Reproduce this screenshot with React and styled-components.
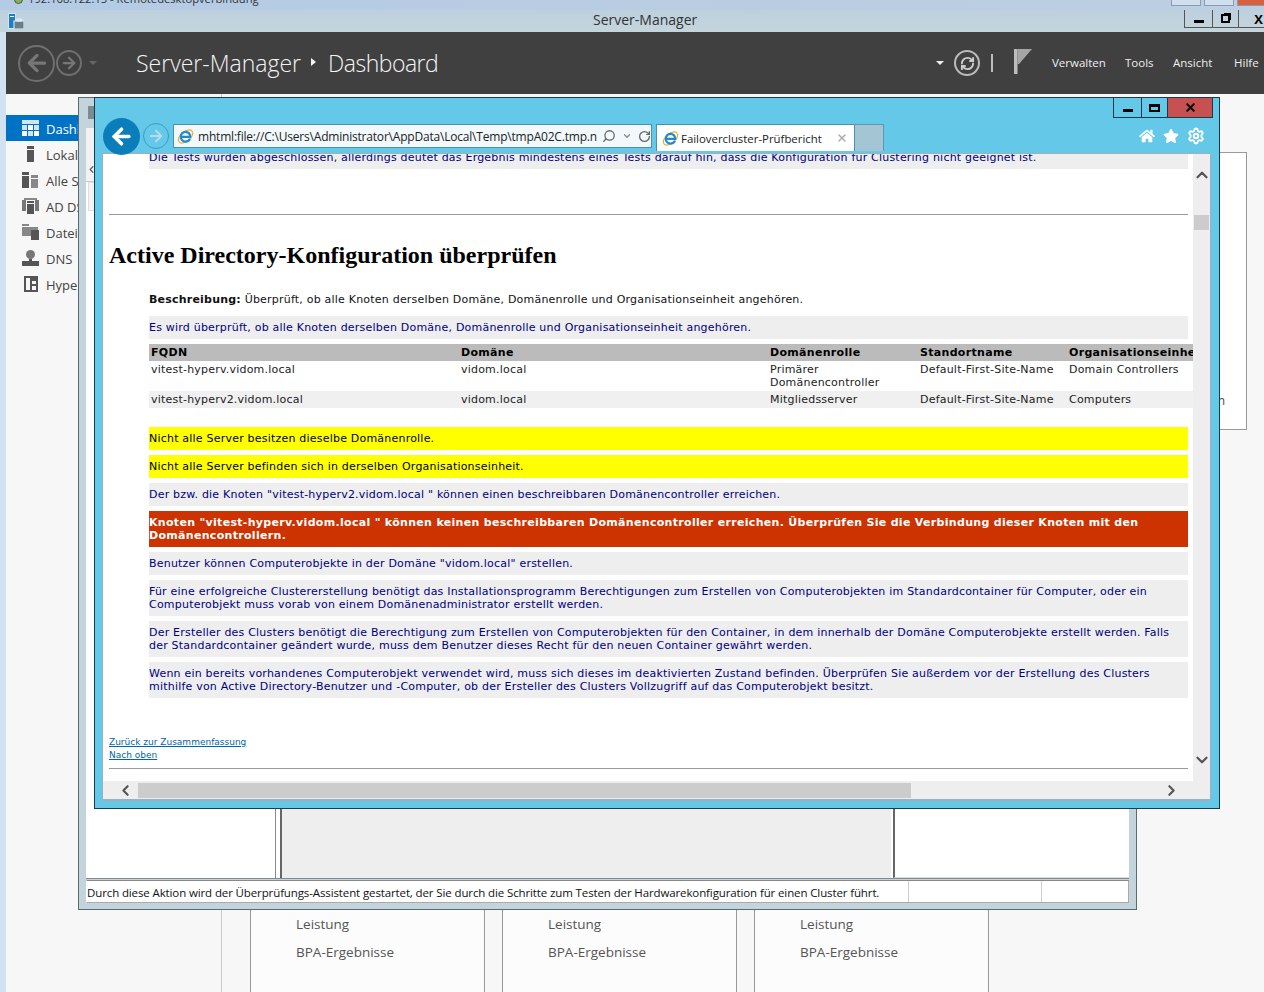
import React from "react";
import styled, { createGlobalStyle } from "styled-components";
import { ArrowLeft, ArrowRight, ChevronDown, ChevronLeft, ChevronRight, ChevronUp, RefreshCw, RotateCw, Search, Settings, X } from "lucide-react";
import { FaHome, FaStar } from "react-icons/fa";

const GlobalStyle = createGlobalStyle`
  html, body {
    margin: 0;
    padding: 0;
    background: #f7f7f7;
    overflow: hidden;
  }
  * {
    box-sizing: border-box;
  }
`;

const UI_FONT = `"Open Sans", "Noto Sans", sans-serif`;
const DOC_FONT = `"DejaVu Sans", Verdana, sans-serif`;

function Sidebar() {
  const items = [
    { label: "Dashboard", icon: <DashIcon />, active: true },
    { label: "Lokaler Server", icon: <LocalIcon /> },
    { label: "Alle Server", icon: <AllIcon /> },
    { label: "AD DS", icon: <AdIcon /> },
    { label: "Dateidienste", icon: <FilesIcon /> },
    { label: "DNS", icon: <DnsIcon /> },
    { label: "Hyper-V", icon: <HyperIcon /> },
  ];

  return (
    <SideColumn>
      {items.map((item) => (
        <SideItem key={item.label} $active={item.active}>
          {item.icon}
          <span>{item.label}</span>
        </SideItem>
      ))}
    </SideColumn>
  );
}

const DashIcon = () => (
  <svg width="17" height="16" viewBox="0 0 17 16" fill="#cfe4f4">
    <rect x="0" y="0" width="17" height="4" />
    <rect x="0" y="5" width="5" height="5" />
    <rect x="6" y="5" width="5" height="5" fill="#fff" />
    <rect x="12" y="5" width="5" height="5" />
    <rect x="0" y="11" width="5" height="5" fill="#fff" />
    <rect x="6" y="11" width="5" height="5" />
    <rect x="12" y="11" width="5" height="5" fill="#fff" />
  </svg>
);

const LocalIcon = () => (
  <svg width="17" height="16" viewBox="0 0 17 16" fill="#555">
    <rect x="5" y="0" width="7" height="3" />
    <rect x="5" y="4" width="7" height="12" />
  </svg>
);

const AllIcon = () => (
  <svg width="17" height="16" viewBox="0 0 17 16" fill="#555">
    <rect x="0" y="0" width="7" height="3" />
    <rect x="0" y="4" width="7" height="12" />
    <rect x="9" y="3" width="7" height="3" fill="#888" />
    <rect x="9" y="7" width="7" height="9" fill="#888" />
  </svg>
);

const AdIcon = () => (
  <svg width="17" height="16" viewBox="0 0 17 16" fill="#555">
    <rect x="0" y="2" width="4" height="11" fill="#777" />
    <rect x="13" y="2" width="4" height="11" fill="#777" />
    <rect x="2" y="0" width="13" height="2" fill="#888" />
    <rect x="5" y="3" width="7" height="2" />
    <rect x="5" y="6" width="7" height="10" />
  </svg>
);

const FilesIcon = () => (
  <svg width="17" height="16" viewBox="0 0 17 16" fill="#888">
    <rect x="0" y="0" width="7" height="2" />
    <rect x="0" y="3" width="16" height="9" />
    <rect x="9" y="6" width="8" height="10" fill="#555" />
  </svg>
);

const DnsIcon = () => (
  <svg width="17" height="16" viewBox="0 0 17 16" fill="#555">
    <circle cx="8.5" cy="4.5" r="4.5" fill="#777" />
    <rect x="0" y="11" width="17" height="5" />
    <rect x="7" y="9" width="3" height="2" />
  </svg>
);

const HyperIcon = () => (
  <svg width="17" height="16" viewBox="0 0 17 16" fill="#555">
    <rect x="2" y="0" width="14" height="16" />
    <rect x="4" y="2" width="4" height="12" fill="#f7f7f7" />
    <rect x="10" y="5" width="4" height="3" fill="#f7f7f7" />
    <rect x="10" y="10" width="4" height="4" fill="#f7f7f7" />
  </svg>
);

const ServerManagerIcon = () => (
  <svg width="16" height="16" viewBox="0 0 16 16">
    <rect x="0.5" y="0.5" width="7" height="15" fill="#1f7fc4" stroke="#cfe6f5" />
    <rect x="2" y="3" width="4" height="1" fill="#fff" />
    <rect x="6" y="8" width="10" height="8" fill="#6a7f8c" stroke="#e8f2f8" strokeWidth="1" />
    <rect x="9" y="6" width="4" height="2" fill="none" stroke="#e8f2f8" />
  </svg>
);

const IeLogo = () => (
  <svg width="17" height="17" viewBox="0 0 20 20">
    <ellipse cx="10" cy="10" rx="10" ry="5.5" fill="none" stroke="#e9b233" strokeWidth="1.5" transform="rotate(-40 10 10)" />
    <path
      d="M4.5 10.5H15.5C15.5 6.5 13 4.5 10 4.5C6.8 4.5 4.5 7.2 4.5 10.5C4.5 13.8 6.8 16 10 16C12.3 16 14.2 15 15.2 13"
      fill="none"
      stroke="#1f8ad4"
      strokeWidth="2.6"
    />
  </svg>
);

const FlagIcon = () => (
  <svg width="18" height="25" viewBox="0 0 18 25">
    <rect x="0" y="0" width="3.5" height="25" fill="#bdbdbd" />
    <path d="M3.5 0H18L5 15H3.5Z" fill="#a5a5a5" />
  </svg>
);

function Doc() {
  return (
    <DocBody>
      <Band $top={0}>
        Die Tests wurden abgeschlossen, allerdings deutet das Ergebnis mindestens eines Tests darauf hin, dass die
        Konfiguration für Clustering nicht geeignet ist.
      </Band>
      <Rule $top={45} />
      <Heading>Active Directory-Konfiguration überprüfen</Heading>
      <Description>
        <b>Beschreibung:</b> Überprüft, ob alle Knoten derselben Domäne, Domänenrolle und Organisationseinheit angehören.
      </Description>
      <Band $top={10}>
        Es wird überprüft, ob alle Knoten derselben Domäne, Domänenrolle und Organisationseinheit angehören.
      </Band>
      <ResultTable>
        <colgroup>
          <col width="310" />
          <col width="309" />
          <col width="150" />
          <col width="149" />
          <col width="200" />
        </colgroup>
        <thead>
          <tr>
            <th>FQDN</th>
            <th>Domäne</th>
            <th>Domänenrolle</th>
            <th>Standortname</th>
            <th>Organisationseinheit</th>
          </tr>
        </thead>
        <tbody>
          <tr>
            <td>vitest-hyperv.vidom.local</td>
            <td>vidom.local</td>
            <td>Primärer Domänencontroller</td>
            <td>Default-First-Site-Name</td>
            <td>Domain Controllers</td>
          </tr>
          <tr>
            <td>vitest-hyperv2.vidom.local</td>
            <td>vidom.local</td>
            <td>Mitgliedsserver</td>
            <td>Default-First-Site-Name</td>
            <td>Computers</td>
          </tr>
        </tbody>
      </ResultTable>
      <Band $tone="warn" $top={19}>
        Nicht alle Server besitzen dieselbe Domänenrolle.
      </Band>
      <Band $tone="warn">Nicht alle Server befinden sich in derselben Organisationseinheit.</Band>
      <Band>Der bzw. die Knoten "vitest-hyperv2.vidom.local " können einen beschreibbaren Domänencontroller erreichen.</Band>
      <Band $tone="error">
        Knoten "vitest-hyperv.vidom.local " können keinen beschreibbaren Domänencontroller erreichen. Überprüfen Sie die
        Verbindung dieser Knoten mit den Domänencontrollern.
      </Band>
      <Band>Benutzer können Computerobjekte in der Domäne "vidom.local" erstellen.</Band>
      <Band>
        Für eine erfolgreiche Clustererstellung benötigt das Installationsprogramm Berechtigungen zum Erstellen von
        Computerobjekten im Standardcontainer für Computer, oder ein Computerobjekt muss vorab von einem
        Domänenadministrator erstellt werden.
      </Band>
      <Band>
        Der Ersteller des Clusters benötigt die Berechtigung zum Erstellen von Computerobjekten für den Container, in dem
        innerhalb der Domäne Computerobjekte erstellt werden. Falls der Standardcontainer geändert wurde, muss dem Benutzer
        dieses Recht für den neuen Container gewährt werden.
      </Band>
      <Band>
        Wenn ein bereits vorhandenes Computerobjekt verwendet wird, muss sich dieses im deaktivierten Zustand befinden.
        Überprüfen Sie außerdem vor der Erstellung des Clusters mithilfe von Active Directory-Benutzer und -Computer, ob der
        Ersteller des Clusters Vollzugriff auf das Computerobjekt besitzt.
      </Band>
      <DocLinks>
        <a href="#summary">Zurück zur Zusammenfassung</a>
        <a href="#top">Nach oben</a>
      </DocLinks>
      <Rule $top={6} />
    </DocBody>
  );
}

function App() {
  return (
    <>
      <GlobalStyle />
      <Desktop>
        <RdpBar>
          <RdpDot />
          <RdpTitle>192.168.122.15 - Remotedesktopverbindung</RdpTitle>
          <RdpButtons>
            <RdpButton />
            <RdpButton />
            <RdpButton $close />
          </RdpButtons>
        </RdpBar>

        <TitleBar>
          <TitleIcon>
            <ServerManagerIcon />
          </TitleIcon>
          <TitleText>Server-Manager</TitleText>
          <WinControls>
            <WinButton $w={28}>
              <MinGlyph />
            </WinButton>
            <WinButton $w={26}>
              <RestoreGlyph />
            </WinButton>
            <WinButton $w={40}>
              <b>X</b>
            </WinButton>
          </WinControls>
        </TitleBar>

        <Frame>
          <Header>
            <NavCircle $size={37}>
              <ArrowLeft size={26} strokeWidth={3} color="#777" />
            </NavCircle>
            <NavCircle $size={26} $gap={1}>
              <ArrowRight size={18} strokeWidth={3} color="#777" />
            </NavCircle>
            <Caret $color="#666" $left={7} />
            <Crumb $left={39}>Server-Manager</Crumb>
            <CrumbArrow />
            <Crumb $left={12} $spacing={-0.5}>
              Dashboard
            </Crumb>
            <HeaderRight>
              <Caret $color="#eee" />
              <RefreshCircle>
                <RefreshCw size={15} strokeWidth={3} color="#ccc" />
              </RefreshCircle>
              <HeaderSep />
              <FlagSlot>
                <FlagIcon />
              </FlagSlot>
              <Menu $w={73}>Verwalten</Menu>
              <Menu $w={48}>Tools</Menu>
              <Menu $w={61}>Ansicht</Menu>
              <Menu $w={30}>Hilfe</Menu>
            </HeaderRight>
          </Header>
          <Body>
            <Sidebar />
            <Main>
              <SidePanel>n</SidePanel>
              <Tiles>
                {[0, 1, 2].map((i) => (
                  <Tile key={i}>
                    <TileLine>Leistung</TileLine>
                    <TileLine>BPA-Ergebnisse</TileLine>
                  </Tile>
                ))}
              </Tiles>
            </Main>
          </Body>
        </Frame>

        <WizardWindow>
          <WizardTop>
            <WizardTool />
          </WizardTop>
          <WizardNav>
            <ChevronLeft size={11} strokeWidth={3} color="#666" />
          </WizardNav>
          <WizardPanes>
            <PaneLeft>
              <TreeBox />
            </PaneLeft>
            <PaneCenter />
            <PaneRight />
          </WizardPanes>
          <StatusBar>
            <StatusCell $w={822}>
              Durch diese Aktion wird der Überprüfungs-Assistent gestartet, der Sie durch die Schritte zum Testen der
              Hardwarekonfiguration für einen Cluster führt.
            </StatusCell>
            <StatusCell $w={133} />
            <StatusCell $w={88} />
          </StatusBar>
        </WizardWindow>

        <IeWindow>
          <IeControls>
            <IeButton $w={28}>
              <MinGlyph />
            </IeButton>
            <IeButton $w={26}>
              <MaxGlyph />
            </IeButton>
            <IeButton $w={46} $close>
              <X size={13} strokeWidth={4} color="#111" />
            </IeButton>
          </IeControls>
          <IeToolbar>
            <BackButton>
              <ArrowLeft size={25} strokeWidth={3.5} color="#fff" />
            </BackButton>
            <ForwardButton>
              <ArrowRight size={18} strokeWidth={2.5} color="#b8dcec" />
            </ForwardButton>
            <AddressBar>
              <IeLogo />
              <AddressText>mhtml:file://C:\Users\Administrator\AppData\Local\Temp\tmpA02C.tmp.n</AddressText>
              <AddressTools>
                <Search size={14} strokeWidth={2.2} color="#666" style={{ transform: "scaleX(-1)" }} />
                <ChevronDown size={10} strokeWidth={3} color="#888" />
                <RotateCw size={13} strokeWidth={2.4} color="#666" />
              </AddressTools>
            </AddressBar>
            <Tab>
              <IeLogo />
              <TabTitle>Failovercluster-Prüfbericht</TabTitle>
              <X size={12} strokeWidth={3} color="#aaa" />
            </Tab>
            <NewTab />
            <IeTools>
              <FaHome size={16} color="#fff" />
              <FaStar size={16} color="#fff" />
              <Settings size={18} strokeWidth={2.5} color="#fff" />
            </IeTools>
          </IeToolbar>
          <IeFrame>
            <DocPane>
              <Doc />
            </DocPane>
            <VScroll>
              <ChevronUp size={18} strokeWidth={3} color="#555" />
              <VThumb />
              <ChevronDown size={18} strokeWidth={3} color="#555" />
            </VScroll>
            <HScroll>
              <ChevronLeft size={17} strokeWidth={3} color="#555" />
              <HThumb />
              <ChevronRight size={17} strokeWidth={3} color="#555" />
            </HScroll>
          </IeFrame>
        </IeWindow>
      </Desktop>
    </>
  );
}

const Desktop = styled.div`
  position: relative;
  width: 1264px;
  height: 992px;
  overflow: hidden;
  background: #f7f7f7;
  font-family: ${UI_FONT};
`;

const RdpBar = styled.div`
  height: 10px;
  display: flex;
  overflow: hidden;
  padding-left: 14px;
  background: linear-gradient(90deg, #b4cbe6, #b9cde2 60%, #bccfe2);
`;

const RdpDot = styled.div`
  width: 9px;
  height: 9px;
  margin-top: -5px;
  border-radius: 50%;
  background: #8ab04a;
  border: 1px solid #555;
`;

const RdpTitle = styled.div`
  margin: -9px 0 0 5px;
  font-size: 11.2px;
  line-height: 16px;
  color: #333;
`;

const RdpButtons = styled.div`
  display: flex;
  gap: 3px;
  margin-left: auto;
  margin-right: -3px;
`;

const RdpButton = styled.div`
  width: 30px;
  height: 6px;
  border: 1px solid #8a9bb0;
  border-top: none;
  background: ${(p) => (p.$close ? "#d9603f" : "#d0dfee")};
`;

const TitleBar = styled.div`
  height: 22px;
  display: grid;
  grid-template-columns: 593px auto 1fr;
  background: linear-gradient(#bdd0de, #c4d5dc);
`;

const TitleIcon = styled.div`
  padding: 2px 0 0 8px;
`;

const TitleText = styled.div`
  font-size: 14px;
  line-height: 20px;
  color: #333;
`;

const WinControls = styled.div`
  display: flex;
  justify-content: flex-end;
  align-items: flex-start;
  margin-right: -14px;
`;

const WinButton = styled.div`
  width: ${(p) => p.$w}px;
  height: 18px;
  display: flex;
  align-items: center;
  justify-content: center;
  border-left: 1px solid #555;
  border-bottom: 1px solid #555;
  font-size: 13px;
  color: #000;
`;

const MinGlyph = styled.div`
  width: 10px;
  height: 3px;
  margin-top: 5px;
  background: #000;
`;

const MaxGlyph = styled.div`
  width: 11px;
  height: 8px;
  border: 2px solid #000;
  border-top-width: 3px;
`;

const RestoreGlyph = styled.div`
  width: 9px;
  height: 9px;
  border: 2px solid #000;
  box-shadow: 2px -2px 0 -1px #000;
`;

const Frame = styled.div`
  margin-left: 6px;
  height: 960px;
  display: flex;
  flex-direction: column;
  box-shadow: -6px 0 0 #d2e2f3;
`;

const Header = styled.div`
  height: 62px;
  flex: none;
  display: flex;
  align-items: center;
  padding-left: 12px;
  background: #404040;
`;

const NavCircle = styled.div`
  width: ${(p) => p.$size}px;
  height: ${(p) => p.$size}px;
  margin-left: ${(p) => p.$gap || 0}px;
  display: flex;
  align-items: center;
  justify-content: center;
  flex: none;
  border: 2px solid #6f6f6f;
  border-radius: 50%;
`;

const Caret = styled.div`
  width: 0;
  height: 0;
  margin-left: ${(p) => p.$left || 0}px;
  border-left: 4px solid transparent;
  border-right: 4px solid transparent;
  border-top: 4px solid ${(p) => p.$color};
`;

const Crumb = styled.div`
  margin-left: ${(p) => p.$left}px;
  font-size: 23px;
  font-weight: 300;
  letter-spacing: ${(p) => p.$spacing || 0}px;
  color: #f4f4f4;
`;

const CrumbArrow = styled.div`
  width: 0;
  height: 0;
  margin: -2px 0 0 10px;
  border-top: 4px solid transparent;
  border-bottom: 4px solid transparent;
  border-left: 5px solid #f4f4f4;
`;

const HeaderRight = styled.div`
  margin-left: auto;
  display: flex;
  align-items: center;
`;

const RefreshCircle = styled.div`
  width: 26px;
  height: 26px;
  margin-left: 10px;
  display: flex;
  align-items: center;
  justify-content: center;
  border: 2px solid #bbb;
  border-radius: 50%;
`;

const HeaderSep = styled.div`
  width: 2px;
  height: 18px;
  margin-left: 11px;
  background: #bbb;
`;

const FlagSlot = styled.div`
  width: 59px;
  padding: 0 0 4px 21px;
  display: flex;
`;

const Menu = styled.div`
  width: ${(p) => p.$w}px;
  margin-top: -2px;
  font-size: 11.5px;
  color: #eee;
`;

const Body = styled.div`
  flex: 1;
  display: flex;
  min-height: 0;
  background: #f7f7f7;
`;

const SideColumn = styled.div`
  width: 216px;
  flex: none;
  padding-top: 21px;
  border-right: 1px solid #ccc;
`;

const SideItem = styled.div`
  height: 26px;
  display: flex;
  align-items: center;
  gap: 7px;
  padding-left: 16px;
  font-size: 13px;
  color: ${(p) => (p.$active ? "#fff" : "#444")};
  background: ${(p) => (p.$active ? "#0072c6" : "transparent")};

  span {
    margin-top: 2px;
  }
`;

const Main = styled.div`
  flex: 1;
  display: flex;
  flex-direction: column;
  min-width: 0;
`;

const SidePanel = styled.div`
  height: 278px;
  flex: none;
  margin: 58px 17px 0 0;
  padding: 0 21px 20px 0;
  display: flex;
  align-items: flex-end;
  justify-content: flex-end;
  border: 1px solid #999;
  background: #fff;
  font-size: 12px;
  color: #444;
`;

const Tiles = styled.div`
  display: flex;
  flex: none;
  gap: 17px;
  margin: 400px 0 0 28px;
`;

const Tile = styled.div`
  width: 235px;
  height: 200px;
  padding: 83px 0 0 45px;
  border: 1px solid #999;
  background: #fcfcfc;
`;

const TileLine = styled.div`
  height: 28px;
  line-height: 20px;
  font-size: 13.5px;
  color: #555;
`;

const WizardWindow = styled.div`
  position: absolute;
  left: 78px;
  top: 97px;
  width: 1059px;
  height: 813px;
  display: flex;
  flex-direction: column;
  padding: 0 7px 6px;
  background: #c3d4dc;
  border: 1px solid #5c6a70;
`;

const WizardTop = styled.div`
  height: 30px;
  flex: none;
  padding: 8px 0 0 2px;
`;

const WizardTool = styled.div`
  width: 8px;
  height: 13px;
  background: #7c8a92;
`;

const WizardNav = styled.div`
  height: 54px;
  flex: none;
  padding-top: 30px;
  background: #f2f2f2;
  border-bottom: 1px solid #ccc;
`;

const WizardPanes = styled.div`
  flex: 1;
  display: flex;
  min-height: 0;
  background: #fff;
  border-bottom: 1px solid #888;
`;

const PaneLeft = styled.div`
  width: 190px;
  padding-left: 2px;
  background: #fff;
  border-right: 1px solid #888;
`;

const TreeBox = styled.div`
  height: 29px;
  background: #f4f4f4;
  border: 1px solid #ddd;
`;

const PaneCenter = styled.div`
  width: 611px;
  margin-left: 4px;
  background: #eee;
  border-left: 2px solid #666;
`;

const PaneRight = styled.div`
  flex: 1;
  margin-left: 2px;
  border-left: 2px solid #666;
  border-bottom: 1px solid #ddd;
`;

const StatusBar = styled.div`
  height: 23px;
  flex: none;
  display: flex;
  margin-top: 1px;
  background: #fff;
  border: 1px solid #aaa;
  border-top-color: #888;
  border-left-color: #fff;
`;

const StatusCell = styled.div`
  width: ${(p) => p.$w}px;
  flex: none;
  overflow: hidden;
  white-space: nowrap;
  line-height: 24px;
  font-size: 11.5px;
  letter-spacing: -0.12px;
  color: #111;
  border-right: 1px solid #ccc;
  &:last-child {
    border-right: none;
  }
`;

const IeWindow = styled.div`
  position: absolute;
  left: 94px;
  top: 97px;
  width: 1126px;
  height: 712px;
  display: flex;
  flex-direction: column;
  background: #64c8e8;
  border: 1px solid #1b3a4a;
`;

const IeControls = styled.div`
  height: 20px;
  flex: none;
  display: flex;
  justify-content: flex-end;
  padding-right: 6px;
`;

const IeButton = styled.div`
  width: ${(p) => p.$w}px;
  display: flex;
  align-items: center;
  justify-content: center;
  background: ${(p) => (p.$close ? "#c75050" : "transparent")};
  border: 1px solid #1b3a4a;
  border-top: none;
  border-right: ${(p) => (p.$close ? "1px solid #1b3a4a" : "none")};
`;

const IeToolbar = styled.div`
  height: 35px;
  flex: none;
  display: flex;
  align-items: flex-start;
  padding: 6px 14px 0 8px;
  position: relative;
  z-index: 1;
`;

const BackButton = styled.div`
  width: 37px;
  height: 37px;
  margin-top: -6px;
  flex: none;
  display: flex;
  align-items: center;
  justify-content: center;
  border-radius: 50%;
  background: #0a7dbb;
`;

const ForwardButton = styled.div`
  width: 26px;
  height: 26px;
  margin: -1px 0 0 3px;
  flex: none;
  display: flex;
  align-items: center;
  justify-content: center;
  border: 1px solid #3a9cc4;
  border-radius: 50%;
`;

const AddressBar = styled.div`
  width: 479px;
  height: 24px;
  margin-left: 4px;
  flex: none;
  display: flex;
  align-items: center;
  gap: 4px;
  padding-left: 3px;
  background: #f2f9fc;
  border: 1px solid #4f8fa8;
`;

const AddressText = styled.div`
  width: 400px;
  flex: none;
  overflow: hidden;
  white-space: nowrap;
  font-size: 12px;
  letter-spacing: -0.2px;
  color: #222;
`;

const AddressTools = styled.div`
  display: flex;
  align-items: center;
  gap: 6px;
`;

const Tab = styled.div`
  width: 199px;
  height: 27px;
  margin-left: 4px;
  flex: none;
  display: flex;
  align-items: center;
  padding: 0 6px 0 5px;
  background: #fff;
  border: 1px solid #4f8fa8;
  border-bottom: none;
`;

const TabTitle = styled.div`
  flex: 1;
  margin-left: 2px;
  white-space: nowrap;
  font-size: 11.4px;
  color: #222;
`;

const NewTab = styled.div`
  width: 29px;
  height: 27px;
  flex: none;
  background: #a4c6d4;
  border: 1px solid #5f97ad;
  border-bottom: none;
  border-left: none;
`;

const IeTools = styled.div`
  margin: 2px 0 0 auto;
  display: flex;
  align-items: center;
  gap: 8px;
  height: 20px;
`;

const IeFrame = styled.div`
  flex: 1;
  min-height: 0;
  display: grid;
  grid-template-columns: 1fr 17px;
  grid-template-rows: 1fr 18px;
  margin: 0 8px 7px 7px;
  background: #eee;
  border: 1px solid #9fb0b8;
  border-bottom-width: 2px;
`;

const DocPane = styled.div`
  min-width: 0;
  min-height: 0;
  overflow: hidden;
  background: #fff;
`;

const DocBody = styled.div`
  margin-top: -8px;
  padding: 0 5px 0 6px;
  font-family: ${DOC_FONT};
  font-size: 11px;
  letter-spacing: 0.21px;
  line-height: 13px;
`;

const Band = styled.div`
  margin: ${(p) => p.$top ?? 5}px 0 0 40px;
  padding: 5px 0;
  letter-spacing: ${(p) => (p.$tone === "error" ? "0.31px" : "inherit")};
  font-weight: ${(p) => (p.$tone === "error" ? 700 : 400)};
  color: ${(p) => (p.$tone === "warn" ? "#000" : p.$tone === "error" ? "#fff" : "#000080")};
  background: ${(p) => (p.$tone === "warn" ? "#ffff00" : p.$tone === "error" ? "#cc3300" : "#eeeeee")};
`;

const Rule = styled.div`
  height: 1px;
  margin-top: ${(p) => p.$top}px;
  background: #999;
`;

const Heading = styled.h2`
  margin: 26px 0 0;
  font-family: "Liberation Serif", "Times New Roman", serif;
  font-size: 24px;
  letter-spacing: 0;
  line-height: 28px;
  font-weight: 700;
  color: #000;
`;

const Description = styled.div`
  margin: 24px 0 0 40px;
  color: #111;
`;

const ResultTable = styled.table`
  width: 1118px;
  margin: 5px 0 0 40px;
  table-layout: fixed;
  border-collapse: collapse;
  font-size: 11px;
  line-height: 13px;
  color: #222;

  th {
    padding: 2px;
    text-align: left;
    white-space: nowrap;
    letter-spacing: 0.31px;
    font-weight: 700;
    color: #000;
    background: #bbbbbb;
  }

  td {
    padding: 2px;
    vertical-align: top;
  }

  tbody tr:nth-child(2) td {
    background: #f0f0f0;
  }
`;

const DocLinks = styled.div`
  margin-top: 38px;
  display: flex;
  flex-direction: column;
  align-items: flex-start;

  a {
    font-size: 9px;
    letter-spacing: 0;
    color: #0066aa;
  }
`;

const VScroll = styled.div`
  display: flex;
  flex-direction: column;
  align-items: center;
  padding: 12px 0 12px;
`;

const VThumb = styled.div`
  width: 15px;
  height: 15px;
  margin-top: 31px;
  margin-bottom: auto;
  background: #ccc;
`;

const HScroll = styled.div`
  grid-column: 1 / -1;
  display: flex;
  align-items: center;
  padding: 0 30px 0 14px;
`;

const HThumb = styled.div`
  width: 773px;
  height: 15px;
  margin-left: 4px;
  margin-right: auto;
  background: #ccc;
`;

export default App;
